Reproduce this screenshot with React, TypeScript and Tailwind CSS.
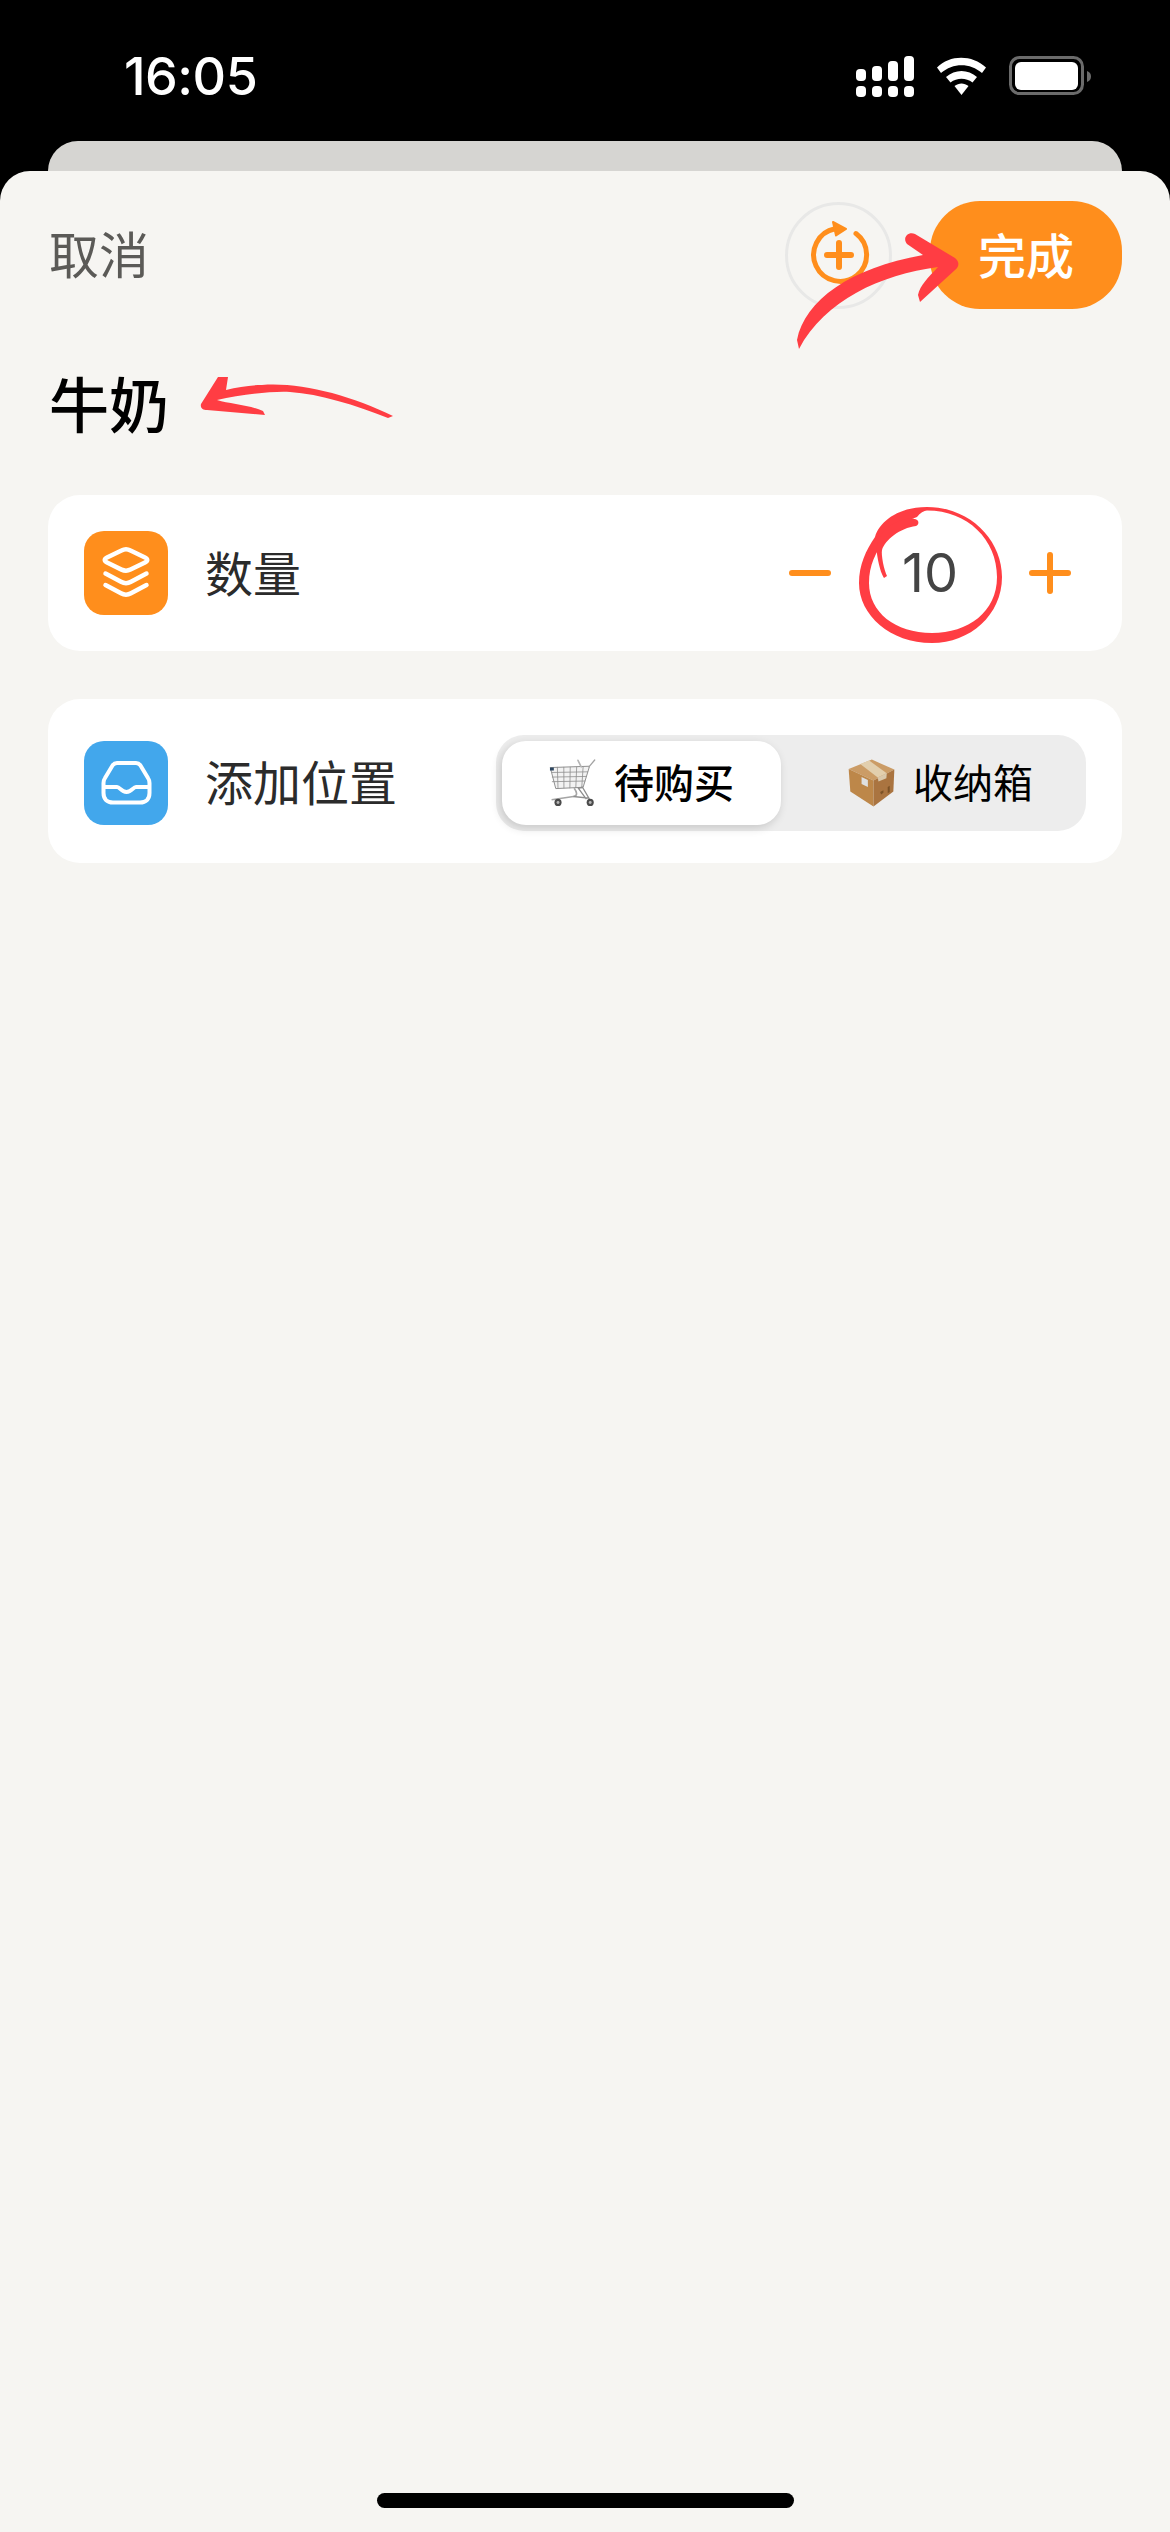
import React from "react";

const CJK = "font-['Noto_Sans_CJK_SC','Noto_Sans',sans-serif]";

function StatusIcons() {
  return (
    <svg width="240" height="44" viewBox="0 0 240 44" fill="none" className="block">
      <g fill="#fff">
        <rect x="4" y="15" width="10" height="12" rx="4" />
        <rect x="20" y="12" width="10" height="15" rx="4" />
        <rect x="36" y="7" width="10" height="20" rx="4" />
        <rect x="52" y="2" width="10" height="25" rx="4" />
        <rect x="4" y="32" width="10" height="11" rx="4" />
        <rect x="20" y="32" width="10" height="11" rx="4" />
        <rect x="36" y="32" width="10" height="11" rx="4" />
        <rect x="52" y="32" width="10" height="11" rx="4" />
        <path d="M85 13.5 C98 0.5 120 0.5 134 13.5 L130 19 C118 8.5 101 8.5 89 19 Z" />
        <path d="M94 23 C103 15 116 15 125 23 L120.5 28.5 C114 23.5 105 23.5 98.5 28.5 Z" />
        <path d="M102.5 32 C107 28.5 112 28.5 116.5 32 L109.5 41 Z" />
        <rect x="163" y="8" width="63" height="28" rx="6" />
      </g>
      <rect x="158.5" y="3.5" width="72" height="36" rx="9" stroke="#6b6b6b" strokeWidth="3" />
      <path d="M235 17 C238 18 239 20 239 22.5 C239 25 238 27 235 28 Z" fill="#6b6b6b" />
    </svg>
  );
}

function RotatePlus() {
  return (
    <svg width="62" height="66" viewBox="0 0 62 66" fill="none" className="block">
      <path d="M48 15.6 A26.5 26.5 0 1 1 27 10.8" stroke="#ff8e1c" strokeWidth="5" strokeLinecap="round" />
      <path d="M25 4 L38 11 L28 17.5 Z" fill="#ff8e1c" stroke="#ff8e1c" strokeWidth="2" strokeLinejoin="round" />
      <path d="M19 37 H43 M31 25 V49" stroke="#ff8e1c" strokeWidth="6" strokeLinecap="round" />
    </svg>
  );
}

function Layers() {
  return (
    <svg width="84" height="84" viewBox="0 0 84 84" fill="none" className="block">
      <path
        d="M37.5 19.5 C40.5 17.8 43.5 17.8 46.5 19.5 L61 26.5 C64 28 64 30 61 31.5 L46.5 38.6 C43.5 40 40.5 40 37.5 38.6 L23 31.5 C20 30 20 28 23 26.5 Z"
        stroke="#fff"
        strokeWidth="4.5"
        strokeLinejoin="round"
      />
      <path d="M21.5 42.5 L37 50.8 C40.5 52.8 43.5 52.8 47 50.8 L62.5 42.5" stroke="#fff" strokeWidth="4.5" strokeLinecap="round" />
      <path d="M21.5 54 L37 62.3 C40.5 64.3 43.5 64.3 47 62.3 L62.5 54" stroke="#fff" strokeWidth="4.5" strokeLinecap="round" />
    </svg>
  );
}

function Inbox() {
  return (
    <svg width="84" height="84" viewBox="0 0 84 84" fill="none" className="block">
      <path
        d="M33 22 H52 C54 22 55.5 23 56.5 24.5 L64 37 C65 38.5 65.5 40 65.5 42 V52 C65.5 58 62 61.5 56 61.5 H29 C23 61.5 19.5 58 19.5 52 V42 C19.5 40 20 38.5 21 37 L28.5 24.5 C29.5 23 31 22 33 22 Z"
        stroke="#fff"
        strokeWidth="4"
        strokeLinejoin="round"
      />
      <path d="M20 46 H33 C36 46 37 51 42.5 51 C48 51 49 46 52 46 H65" stroke="#fff" strokeWidth="4" strokeLinecap="round" />
    </svg>
  );
}

function Cart() {
  const v = [60, 80, 100, 120, 140];
  const h = [66, 80, 94];
  return (
    <svg width="47" height="48" viewBox="34 26 146 146" preserveAspectRatio="none" fill="none" className="block">
      <path d="M38 52 L160 48 L140 112 L55 116 Z" fill="#f2f2f2" stroke="#8d8d8d" strokeWidth="3" />
      {v.map((x) => (
        <path key={x} d={`M${x} 50 L${x + 2 - (x - 60) * 0.08} 115`} stroke="#8f8f8f" strokeWidth="2.5" />
      ))}
      {h.map((y) => (
        <path key={y} d={`M43 ${y + 1} L${160 - (y - 50) * 0.3} ${y - 1}`} stroke="#8f8f8f" strokeWidth="2.5" />
      ))}
      <rect x="37" y="52" width="12" height="9" fill="#2c4560" />
      <path d="M124 30 L134 50" stroke="#b5b5b5" strokeWidth="5" strokeLinecap="round" />
      <path d="M158 50 L176 29" stroke="#a3a3a3" strokeWidth="4" strokeLinecap="round" />
      <path d="M42 150 L110 140 C125 138 120 125 112 115" stroke="#a5a5a5" strokeWidth="5" />
      <path d="M110 140 L158 145 L138 112 L125 115 L150 148" stroke="#8d8d8d" strokeWidth="4" />
      <circle cx="62" cy="158" r="11" fill="#4b4b4b" />
      <circle cx="62" cy="158" r="4.5" fill="#b5b5b5" />
      <circle cx="162" cy="158" r="11" fill="#4b4b4b" />
      <circle cx="162" cy="158" r="4.5" fill="#b5b5b5" />
    </svg>
  );
}

function Box() {
  return (
    <svg width="47" height="48" viewBox="28 26 142 154" preserveAspectRatio="none" fill="none" className="block">
      <path d="M30 58 L100 28 L168 60 L105 95 Z" fill="#cb9c66" />
      <path d="M30 58 L105 95 L105 178 L35 130 Z" fill="#bd8749" />
      <path d="M105 95 L168 60 L165 130 L105 178 Z" fill="#aa7440" />
      <path d="M65 42 L92 31 L145 72 L118 85 Z" fill="#e2cfae" />
      <path d="M118 85 L145 72 L144 88 L120 98 Z" fill="#d9c8ac" />
      <path d="M69 84 L88 93 L88 116 L69 106 Z" fill="#dfe0e0" />
      <path d="M125 132 L135 126 L135 134 L128 140 Z M148 116 L154 112 L154 132 L148 136 Z" fill="#7c5226" />
    </svg>
  );
}

function Annotations() {
  return (
    <svg
      width="1170"
      height="700"
      viewBox="0 0 1170 700"
      fill="#ff3d43"
      className="pointer-events-none absolute left-0 top-0"
    >
      <path d="M797 340 C805 300 850 268 923 255 L907 244 C902 238 908 231 915 234 L955 258 C960 262 959 267 955 270 L920 302 L918 295 C920 285 928 278 938 267 C880 275 825 300 799 349 Z" />
      <path d="M393 416 C350 395 300 382 262 385 C250 385 238 387 226 390 L228 377 L218 377 L201 404 C200 408 203 410 207 410 L265 415 L263 411 C250 405 230 404 217 400 C240 395 270 391 290 392 C320 394 355 405 388 418 Z" />
      <path
        fillRule="evenodd"
        d="M927 507 C970 507 1002 540 1002 577 C1002 615 970 643 932 643 C890 643 859 615 859 583 C859 565 866 550 875 537 C880 520 900 507 927 507 Z M927 510.5 C968 510.5 997 540 997 577 C997 612 968 633 932 633 C895 633 869 612 869 583 C869 565 876 552 884 541 C892 530 905 521 917 517 C920 513 924 510.5 927 510.5 Z"
      />
      <path d="M917 520 C912 516 895 520 885 530 C878 537 875 545 878 560 C880 570 882 575 884 578 L887 576 C884 570 881 555 882 550 C885 540 900 528 916 526 C919 525 919 521 917 520 Z" />
    </svg>
  );
}

export default function App() {
  return (
    <div className={`relative flex h-[2532px] w-[1170px] flex-col overflow-hidden bg-black ${CJK}`}>
      <div className="flex h-[141px] items-start justify-between pl-[124px] pr-[78px] pt-[51px]">
        <span className="font-['Inter',sans-serif] text-[52px] font-medium leading-[52px] tracking-[-0.5px] text-white">16:05</span>
        <div className="pt-[3px]">
          <StatusIcons />
        </div>
      </div>

      <div className="mx-[48px] h-[30px] shrink-0 rounded-t-[30px] bg-[#d6d5d2]" />

      <div className="relative flex min-h-0 flex-1 flex-col rounded-t-[30px] bg-[#f6f5f2] px-[48px] pt-[30px]">
        <div className="flex h-[108px] items-center">
          <span className="pb-[6px] pl-[1px] text-[50px] leading-[64px] text-[#5b5a57]">取消</span>
          <div className="ml-auto flex h-[107px] w-[107px] items-center justify-center rounded-full border-[3px] border-[#e8e8e7]">
            <div className="pb-[8px]">
              <RotatePlus />
            </div>
          </div>
          <div className="ml-[38px] flex h-[108px] w-[192px] items-center justify-center rounded-[50px] bg-[#ff8e1c] pb-[5px] text-[48px] font-medium leading-[60px] text-white">
            完成
          </div>
        </div>

        <div className="mt-[53px] pl-[1px] text-[60px] font-medium leading-[80px] text-black">牛奶</div>

        <div className="mt-[53px] flex h-[156px] items-center rounded-[32px] bg-white pl-[36px] pr-[51px]">
          <div className="h-[84px] w-[84px] rounded-[20px] bg-[#ff8e1c]">
            <Layers />
          </div>
          <span className="ml-[37px] pb-[5px] text-[48px] leading-[64px] text-[#2b2b2b]">数量</span>
          <div className="ml-auto flex items-center">
            <div className="h-[6px] w-[42px] rounded-full bg-[#ff8e1c]" />
            <span className="w-[198px] text-center font-['Inter',sans-serif] text-[54px] leading-[60px] text-[#444444]">10</span>
            <div className="relative flex h-[42px] w-[42px] items-center justify-center">
              <div className="h-[6px] w-[42px] rounded-full bg-[#ff8e1c]" />
              <div className="absolute h-[42px] w-[6px] rounded-full bg-[#ff8e1c]" />
            </div>
          </div>
        </div>

        <div className="mt-[48px] flex h-[164px] items-center rounded-[32px] bg-white pl-[36px] pr-[36px] pt-[3px]">
          <div className="h-[84px] w-[84px] rounded-[20px] bg-[#42a7ec]">
            <Inbox />
          </div>
          <span className="ml-[37px] pb-[6px] text-[48px] leading-[64px] text-[#2b2b2b]">添加位置</span>
          <div className="ml-auto flex h-[96px] w-[590px] items-center rounded-[28px] bg-[#ededed] p-[6px]">
            <div className="flex h-[84px] w-[279px] items-center justify-center gap-[18px] rounded-[24px] bg-white text-[40px] font-medium leading-[52px] text-black shadow-[-2px_3px_10px_rgba(0,0,0,0.16)]">
              <Cart />
              <span className="pb-[3px]">待购买</span>
            </div>
            <div className="ml-[20px] flex h-[84px] flex-1 items-center justify-center gap-[18px] text-[40px] leading-[52px] text-black">
              <Box />
              <span className="pb-[3px]">收纳箱</span>
            </div>
          </div>
        </div>

        <div className="mt-auto mb-[24px] h-[15px] w-[417px] self-center rounded-full bg-black" />
      </div>

      <Annotations />
    </div>
  );
}
